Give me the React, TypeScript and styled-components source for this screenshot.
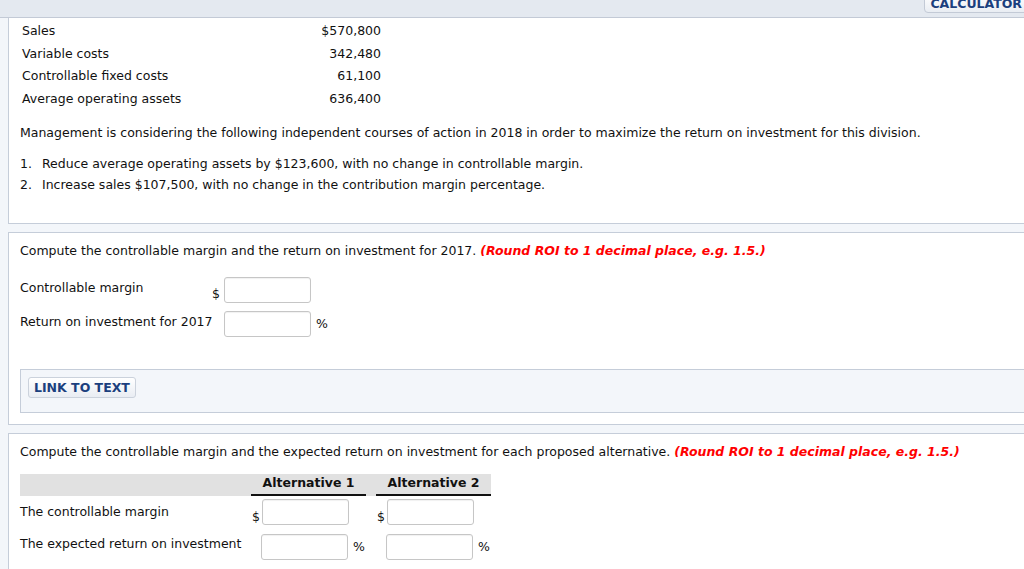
import styled, { createGlobalStyle } from "styled-components";

const GlobalStyle = createGlobalStyle`
  html, body {
    margin: 0;
    padding: 0;
    background: #f3f6fa;
    overflow: hidden;
  }
  body {
    font-family: "DejaVu Sans", Verdana, sans-serif;
    font-size: 12.5px;
    color: #111;
  }
`;

// top strip with the calculator button
const TopBar = styled.div`
  height: 17px;
  background: #e4e9f0;
  border-bottom: 1px solid #c3cad6;
  display: flex;
  justify-content: flex-end;
  align-items: flex-start;
  overflow: hidden;
`;
const CalcButton = styled.button`
  margin-top: -7px;
  margin-right: -13px;
  height: 20px;
  box-sizing: border-box;
  padding: 4px 14px 0 5px;
  border: 1px solid #c3cad6;
  border-radius: 4px;
  background: linear-gradient(#ffffff, #e9edf3);
  color: #1b3f7e;
  font-family: "DejaVu Sans", Verdana, sans-serif;
  font-weight: bold;
  font-size: 12.5px;
  line-height: 12px;
  display: flex;
  align-items: flex-start;
`;

const Page = styled.div`
  padding-left: 8px;
  display: flex;
  flex-direction: column;
  gap: 8px;
`;
const Panel = styled.section<{ $top?: boolean }>`
  background: #fff;
  border: 1px solid #c5cdd9;
  border-top: ${(p) => (p.$top ? "none" : "1px solid #c5cdd9")};
  margin-right: -20px;
  padding: ${(p) => (p.$top ? "2px 0 28px 11px" : "10px 0 11px 11px")};
`;

// panel one: data
const DataGrid = styled.div`
  display: grid;
  grid-template-columns: 1fr auto;
  width: 359px;
  margin-left: 2px;
`;
const DataCell = styled.div<{ $num?: boolean }>`
  height: 22.5px;
  line-height: 22.5px;
  text-align: ${(p) => (p.$num ? "right" : "left")};
`;
const Para = styled.p`
  margin: 15px 0 0;
  line-height: 16px;
`;
const List = styled.ol`
  margin: 12px 0 0;
  padding: 0;
  list-style: none;
`;
const ListItem = styled.li`
  display: flex;
  line-height: 21px;
`;
const ListNum = styled.span`
  width: 22px;
`;

// question blocks
const Question = styled.p`
  margin: 0;
  line-height: 16px;
`;
const Hint = styled.span`
  color: #f00;
  font-weight: bold;
  font-style: italic;
`;
const AnswerGrid = styled.div`
  display: grid;
  grid-template-columns: 192px 12px 87px auto;
  row-gap: 8px;
  margin-top: 18px;
  align-items: start;
`;
const Label = styled.div`
  padding-top: 3px;
  line-height: 16px;
  white-space: nowrap;
`;
const Unit = styled.div<{ $side: "pre" | "post" }>`
  align-self: ${(p) => (p.$side === "pre" ? "end" : "center")};
  text-align: ${(p) => (p.$side === "pre" ? "right" : "left")};
  padding-left: ${(p) => (p.$side === "post" ? "5px" : "0")};
  padding-right: ${(p) => (p.$side === "pre" ? "4px" : "0")};
  padding-bottom: ${(p) => (p.$side === "pre" ? "1px" : "0")};
  line-height: 16px;
`;
const Field = styled.input`
  box-sizing: border-box;
  width: 87px;
  height: 26px;
  border: 1px solid #c6c6c6;
  border-radius: 3px;
  box-shadow: inset 0 1px 1px rgba(0, 0, 0, 0.06);
  margin: 0;
  padding: 0 4px;
  font: inherit;
`;

const LinkBox = styled.div`
  margin-top: 32px;
  background: #f3f6fa;
  border: 1px solid #c5cdd9;
  padding: 7px 0 14px 7px;
`;
const LinkButton = styled.button`
  height: 21px;
  padding: 0 5px;
  border: 1px solid #cbd2dc;
  border-radius: 3px;
  background: linear-gradient(#ffffff, #e9edf3);
  color: #1b3f7e;
  font-family: "DejaVu Sans", Verdana, sans-serif;
  font-weight: bold;
  font-size: 12.5px;
`;

// alternatives table
const AltTable = styled.div`
  display: grid;
  grid-template-columns: 231px 115px 10px 115px;
  margin-top: 14px;
`;
const HeadCell = styled.div<{ $col?: boolean }>`
  background: #e1e1e1;
  height: 22px;
  box-sizing: border-box;
  border-bottom: ${(p) => (p.$col ? "2px solid #111" : "none")};
  text-align: center;
  font-weight: bold;
  line-height: 18px;
`;
const RowLabel = styled.div<{ $first?: boolean }>`
  padding-top: ${(p) => (p.$first ? "8px" : "11px")};
  line-height: 16px;
  white-space: nowrap;
`;
const AltCell = styled.div<{ $first?: boolean }>`
  display: flex;
  align-items: flex-end;
  padding-top: ${(p) => (p.$first ? "3px" : "9px")};
`;
const Gap = styled.div``;
const Sign = styled.span<{ $after?: boolean }>`
  width: ${(p) => (p.$after ? "auto" : "10px")};
  padding-left: ${(p) => (p.$after ? "5px" : "1px")};
  line-height: 16px;
  align-self: ${(p) => (p.$after ? "center" : "flex-end")};
`;
const Spacer = styled.span`
  width: 10px;
`;

const data = [
  ["Sales", "$570,800"],
  ["Variable costs", "342,480"],
  ["Controllable fixed costs", "61,100"],
  ["Average operating assets", "636,400"],
];

const hint = "(Round ROI to 1 decimal place, e.g. 1.5.)";

export default function App() {
  return (
    <>
      <GlobalStyle />
      <TopBar>
        <CalcButton>CALCULATOR</CalcButton>
      </TopBar>
      <Page>
        <Panel $top>
          <DataGrid>
            {data.map(([k, v]) => (
              <>
                <DataCell key={k}>{k}</DataCell>
                <DataCell key={k + "v"} $num>
                  {v}
                </DataCell>
              </>
            ))}
          </DataGrid>
          <Para>
            Management is considering the following independent courses of action in 2018 in order to
            maximize the return on investment for this division.
          </Para>
          <List>
            <ListItem>
              <ListNum>1.</ListNum>Reduce average operating assets by $123,600, with no change in controllable margin.
            </ListItem>
            <ListItem>
              <ListNum>2.</ListNum>Increase sales $107,500, with no change in the contribution margin percentage.
            </ListItem>
          </List>
        </Panel>

        <Panel>
          <Question>
            Compute the controllable margin and the return on investment for 2017. <Hint>{hint}</Hint>
          </Question>
          <AnswerGrid>
            <Label>Controllable margin</Label>
            <Unit $side="pre">$</Unit>
            <Field />
            <div />
            <Label>Return on investment for 2017</Label>
            <div />
            <Field />
            <Unit $side="post">%</Unit>
          </AnswerGrid>
          <LinkBox>
            <LinkButton>LINK TO TEXT</LinkButton>
          </LinkBox>
        </Panel>

        <Panel>
          <Question>
            Compute the controllable margin and the expected return on investment for each proposed
            alternative. <Hint>{hint}</Hint>
          </Question>
          <AltTable>
            <HeadCell />
            <HeadCell $col>Alternative 1</HeadCell>
            <HeadCell />
            <HeadCell $col>Alternative 2</HeadCell>

            <RowLabel $first>The controllable margin</RowLabel>
            <AltCell $first>
              <Sign>$</Sign>
              <Field />
            </AltCell>
            <Gap />
            <AltCell $first>
              <Sign>$</Sign>
              <Field />
            </AltCell>

            <RowLabel>The expected return on investment</RowLabel>
            <AltCell>
              <Spacer />
              <Field />
              <Sign $after>%</Sign>
            </AltCell>
            <Gap />
            <AltCell>
              <Spacer />
              <Field />
              <Sign $after>%</Sign>
            </AltCell>
          </AltTable>
        </Panel>
      </Page>
    </>
  );
}
